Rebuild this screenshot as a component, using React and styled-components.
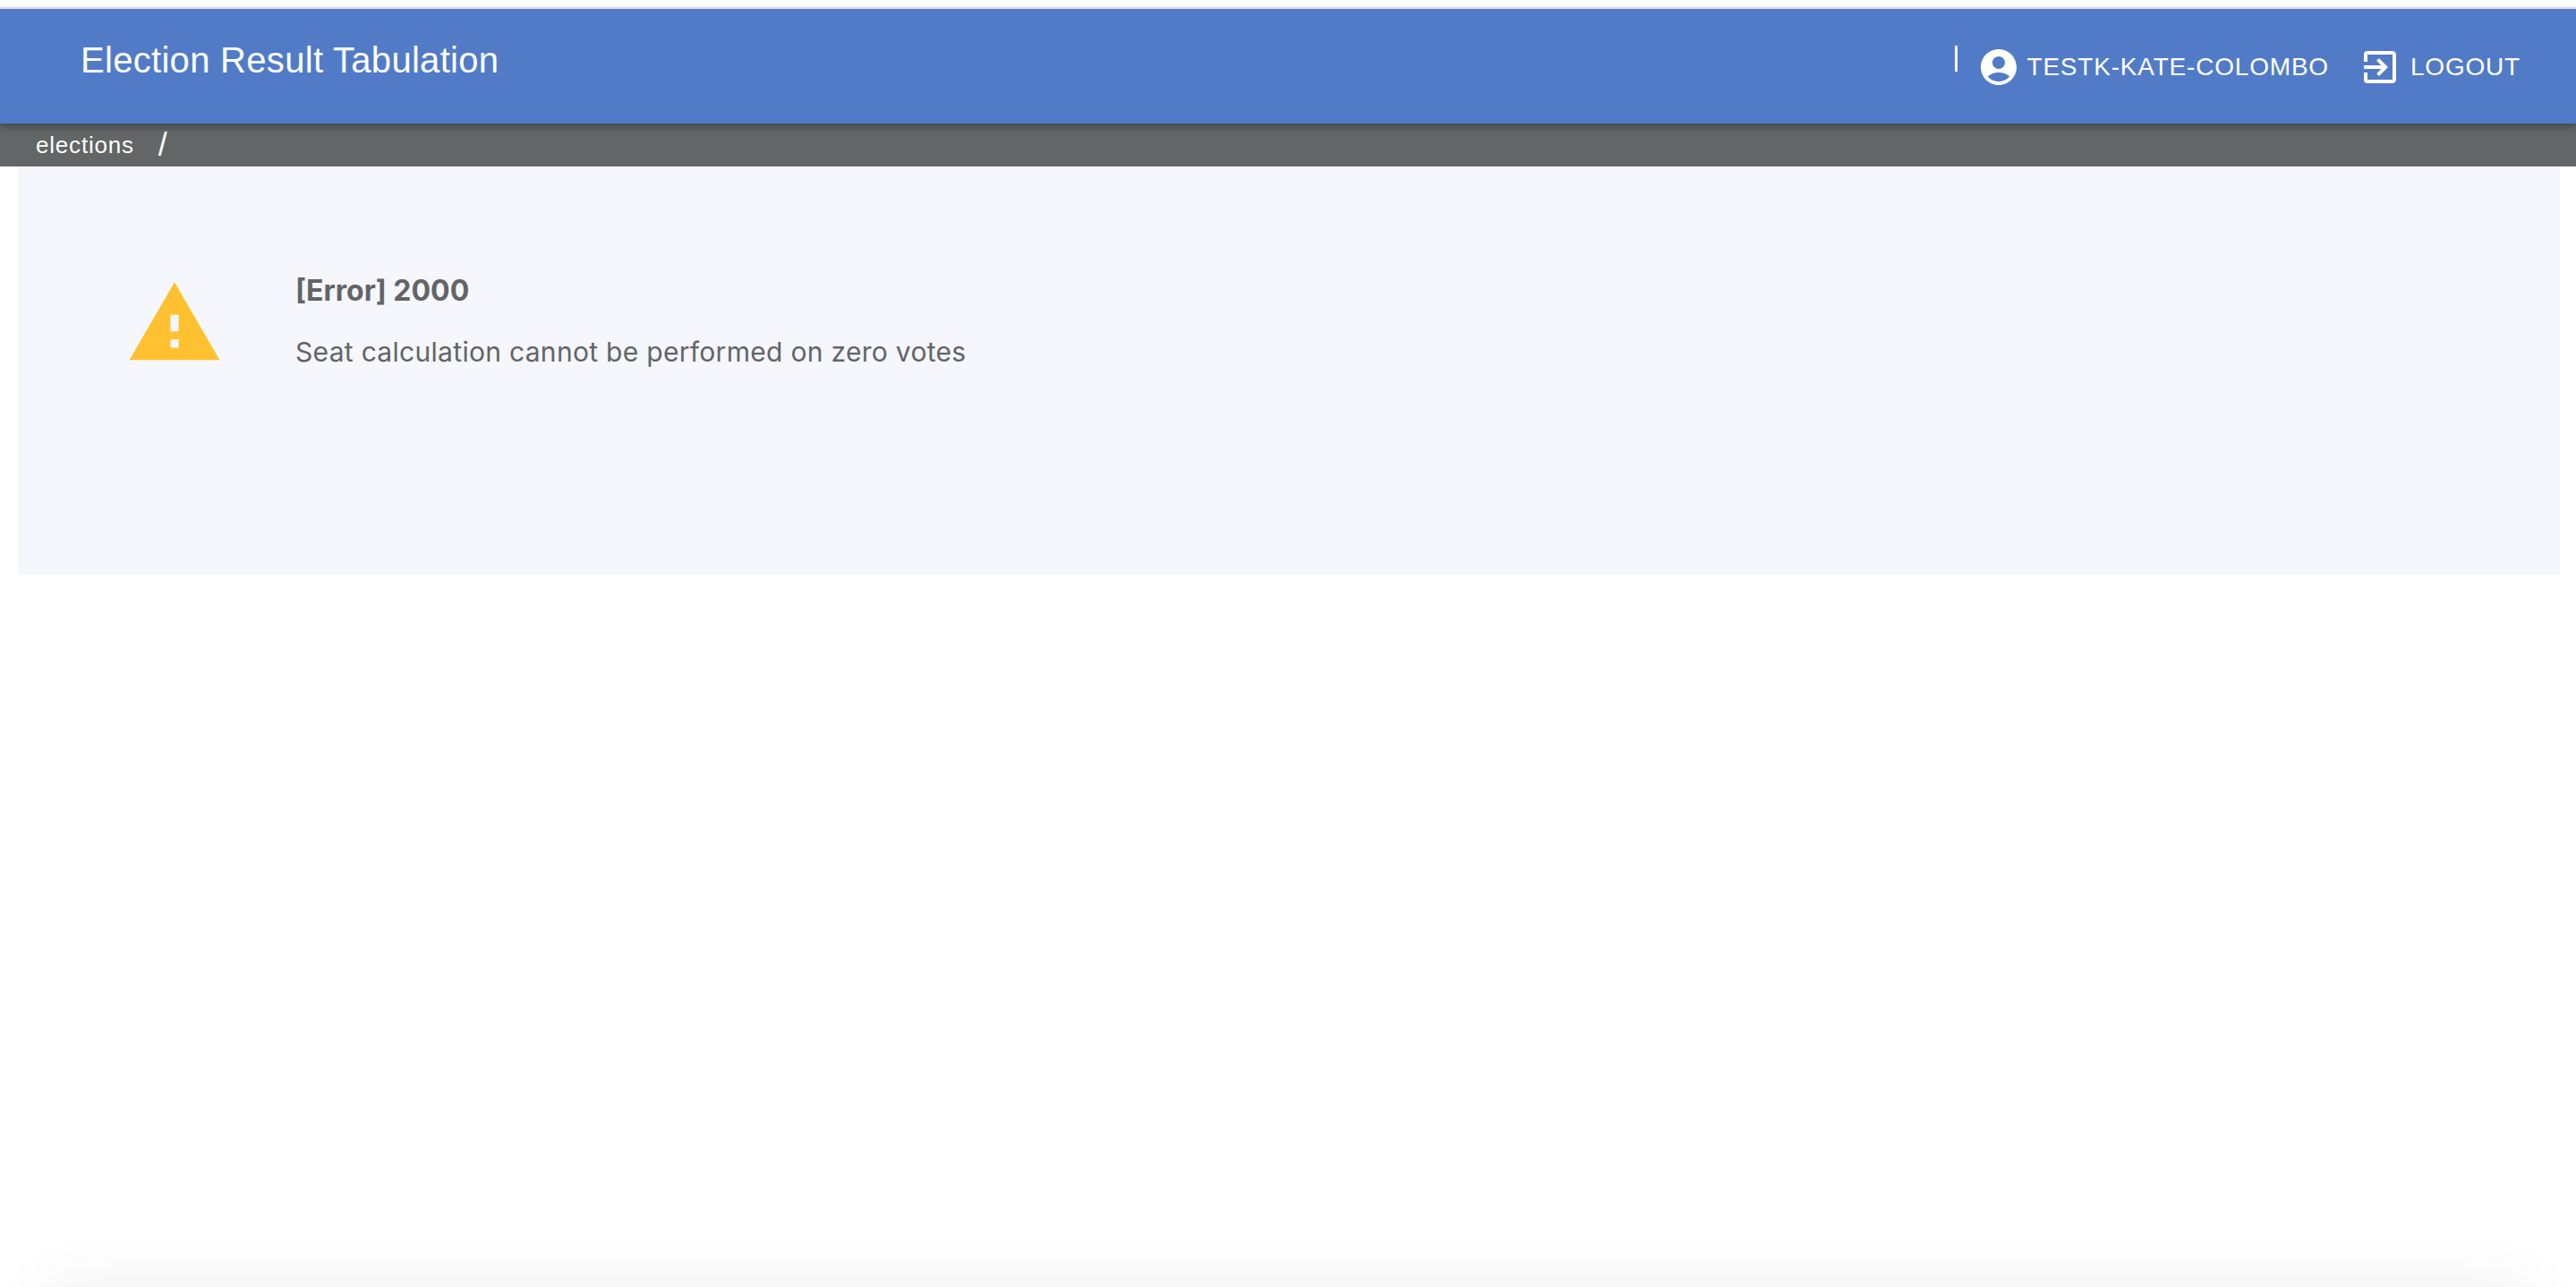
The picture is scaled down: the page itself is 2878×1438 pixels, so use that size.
import styled, { createGlobalStyle } from 'styled-components'
import { MdAccountCircle, MdExitToApp, MdWarning } from 'react-icons/md'

const GlobalStyle = createGlobalStyle`
    html,
    body {
        margin: 0;
        padding: 0;
        background: #ffffff;
    }
    * {
        box-sizing: border-box;
    }
`

const Page = styled.div`
    display: flex;
    flex-direction: column;
    height: 1438px;
    overflow: hidden;
    padding-top: 8px;
`
const AppBar = styled.header`
    position: relative;
    z-index: 1;
    display: flex;
    flex: none;
    justify-content: space-between;
    height: 130px;
    padding: 0 62px 0 90px;
    background: #517bc7;
    border-top: 2px solid #dcdce4;
    box-shadow: 0 4px 8px rgba(0, 0, 0, 0.3);
    color: #ffffff;
`
const Title = styled.h1`
    margin: 0;
    padding-top: 32px;
    font: 400 40px/50px 'Liberation Sans', Arial, sans-serif;
    letter-spacing: 0.3px;
`
const UserArea = styled.nav`
    display: flex;
    align-items: flex-start;
    padding-top: 41px;
`
const Divider = styled.span`
    width: 3px;
    height: 29px;
    margin: 0 22px 0 0;
    background: #ffffff;
`
const NavItem = styled.span`
    display: flex;
    align-items: center;
    margin-right: ${(props) => props.$gap || 0}px;
    font: 400 28px/48px 'Liberation Sans', Arial, sans-serif;
    letter-spacing: 0.8px;
    text-transform: uppercase;
    svg {
        margin-right: ${(props) => props.$iconGap}px;
    }
`
const Breadcrumb = styled.div`
    display: flex;
    flex: none;
    align-items: center;
    height: 48px;
    padding-left: 40px;
    background: #626667;
    color: #ffffff;
`
const Crumb = styled.span`
    margin-top: -1px;
    font: 400 26px/48px 'Liberation Sans', Arial, sans-serif;
    letter-spacing: 0.8px;
`
const Slash = styled.span`
    margin-left: 27px;
    font: 400 36px/48px 'Liberation Sans', Arial, sans-serif;
`
const Panel = styled.main`
    display: flex;
    flex: none;
    align-items: flex-start;
    height: 456px;
    margin: 0 18px 0 20px;
    padding: 120px 0 0 120px;
    background: #f5f7fc;
`
const WarningIcon = styled(MdWarning)`
    flex: none;
    color: #ffc130;
`
const Message = styled.div`
    margin-left: 80px;
    color: #626468;
    font-family: Inter, 'Noto Sans', sans-serif;
`
const ErrorCode = styled.h2`
    margin: -3px 0 0;
    font-size: 32px;
    font-weight: 700;
    line-height: 44px;
`
const ErrorText = styled.p`
    margin: 24px 0 0;
    font-size: 30px;
    font-weight: 400;
    letter-spacing: 0.3px;
    line-height: 44px;
`
// sits just under the fold, only its soft shadow shows at the bottom of the page
const BottomShade = styled.div`
    flex: none;
    height: 100px;
    margin: 796px 50px 0;
    box-shadow: 0 0 70px rgba(0, 0, 0, 0.07);
`

function App() {
    return (
        <Page>
            <GlobalStyle />
            <AppBar>
                <Title>Election Result Tabulation</Title>
                <UserArea>
                    <Divider />
                    <NavItem $gap={33} $iconGap={7}>
                        <MdAccountCircle size={48} />
                        testk-kate-colombo
                    </NavItem>
                    <NavItem $iconGap={10}>
                        <MdExitToApp size={48} />
                        Logout
                    </NavItem>
                </UserArea>
            </AppBar>
            <Breadcrumb>
                <Crumb>elections</Crumb>
                <Slash>/</Slash>
            </Breadcrumb>
            <Panel>
                <WarningIcon size={110} />
                <Message>
                    <ErrorCode>[Error] 2000</ErrorCode>
                    <ErrorText>Seat calculation cannot be performed on zero votes</ErrorText>
                </Message>
            </Panel>
            <BottomShade />
        </Page>
    )
}

export default App
